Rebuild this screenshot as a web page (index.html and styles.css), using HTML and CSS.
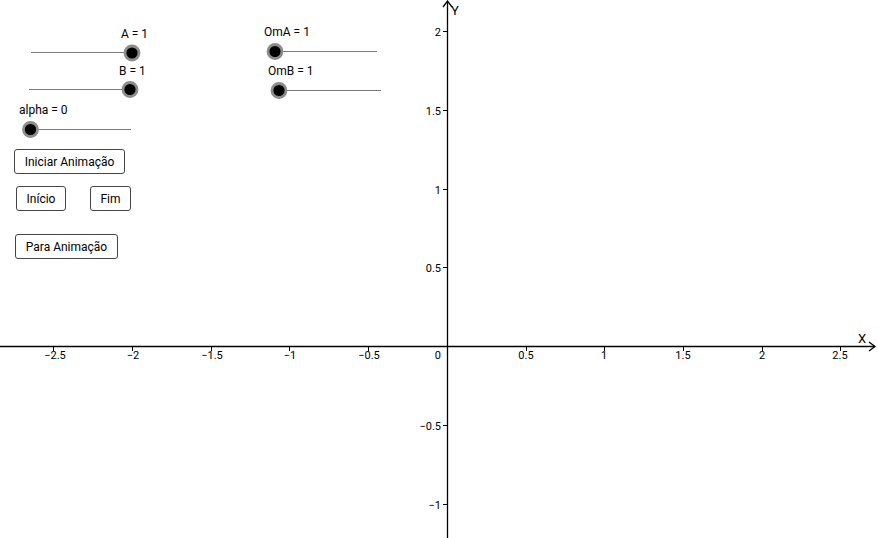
FILE: index.html
```html
<!DOCTYPE html>
<html lang="pt">
<head>
<meta charset="utf-8">
<title>GeoGebra</title>
<link rel="stylesheet" href="styles.css">
</head>
<body>
<div class="canvas">
  <svg class="graphics" width="878" height="538" viewBox="0 0 878 538" xmlns="http://www.w3.org/2000/svg">
    <!-- axes -->
    <g class="axis">
      <line x1="0" y1="346.5" x2="875" y2="346.5"/>
      <polyline points="869,342 875,346.5 869,351" fill="none"/>
      <line x1="447.5" y1="2" x2="447.5" y2="538"/>
      <polyline points="443,7 447.5,1 452,7" fill="none"/>
    </g>
    <g class="ticks">
      <line x1="53.5" y1="346.5" x2="53.5" y2="351"/>
      <line x1="132.5" y1="346.5" x2="132.5" y2="351"/>
      <line x1="211.5" y1="346.5" x2="211.5" y2="351"/>
      <line x1="289.5" y1="346.5" x2="289.5" y2="351"/>
      <line x1="368.5" y1="346.5" x2="368.5" y2="351"/>
      <line x1="526.5" y1="346.5" x2="526.5" y2="351"/>
      <line x1="604.5" y1="346.5" x2="604.5" y2="351"/>
      <line x1="683.5" y1="346.5" x2="683.5" y2="351"/>
      <line x1="762.5" y1="346.5" x2="762.5" y2="351"/>
      <line x1="840.5" y1="346.5" x2="840.5" y2="351"/>
      <line x1="443" y1="31.5" x2="447.5" y2="31.5"/>
      <line x1="443" y1="110.5" x2="447.5" y2="110.5"/>
      <line x1="443" y1="189.5" x2="447.5" y2="189.5"/>
      <line x1="443" y1="267.5" x2="447.5" y2="267.5"/>
      <line x1="443" y1="425.5" x2="447.5" y2="425.5"/>
      <line x1="443" y1="504.5" x2="447.5" y2="504.5"/>
    </g>
    <g class="tick-label xl">
      <text x="55" y="359">−2.5</text>
      <text x="133" y="359">−2</text>
      <text x="212" y="359">−1.5</text>
      <text x="290" y="359">−1</text>
      <text x="369" y="359">−0.5</text>
      <text x="526" y="359">0.5</text>
      <text x="604" y="359">1</text>
      <text x="683" y="359">1.5</text>
      <text x="762" y="359">2</text>
      <text x="840" y="359">2.5</text>
    </g>
    <g class="tick-label yl">
      <text x="441" y="35.5">2</text>
      <text x="441" y="114.5">1.5</text>
      <text x="441" y="193.5">1</text>
      <text x="441" y="271.5">0.5</text>
      <text x="441" y="359">0</text>
      <text x="441" y="429.5">−0.5</text>
      <text x="441" y="508.5">−1</text>
    </g>
    <text class="axis-name" x="858" y="343">X</text>
    <text class="axis-name" x="451" y="15">Y</text>

    <!-- sliders -->
    <g class="slider">
      <line x1="31" y1="52.5" x2="132" y2="52.5"/>
      <line x1="29" y1="89.5" x2="130" y2="89.5"/>
      <line x1="30" y1="129.5" x2="131" y2="129.5"/>
      <line x1="275" y1="51.5" x2="377" y2="51.5"/>
      <line x1="279" y1="90.5" x2="381" y2="90.5"/>
    </g>
    <g class="knob">
      <circle cx="132" cy="53" r="7"/>
      <circle cx="130" cy="89.5" r="7"/>
      <circle cx="30.5" cy="129.5" r="7"/>
      <circle cx="275" cy="51.5" r="7"/>
      <circle cx="279" cy="90.5" r="7"/>
    </g>
    <g class="slider-label">
      <text x="121" y="37.5">A = 1</text>
      <text x="119" y="74.5">B = 1</text>
      <text x="19" y="113.5">alpha = 0</text>
      <text x="264" y="35.5">OmA = 1</text>
      <text x="268" y="74.5">OmB = 1</text>
    </g>
  </svg>

  <button class="ggb-btn btn-iniciar">Iniciar Animação</button>
  <button class="ggb-btn btn-inicio">Início</button>
  <button class="ggb-btn btn-fim">Fim</button>
  <button class="ggb-btn btn-para">Para Animação</button>
</div>
</body>
</html>
```

FILE: styles.css
```css
html, body {
  margin: 0;
  padding: 0;
  background: #ffffff;
  overflow: hidden;
}

.canvas {
  position: relative;
  width: 878px;
  height: 538px;
  background: #ffffff;
  font-family: Roboto, "Liberation Sans", sans-serif;
}

.graphics {
  position: absolute;
  left: 0;
  top: 0;
  display: block;
}

.axis line,
.axis polyline {
  stroke: #000000;
  stroke-width: 1.3;
}

.ticks line {
  stroke: #000000;
  stroke-width: 1;
}

.tick-label text {
  font-family: Roboto, "Liberation Sans", sans-serif;
  font-size: 11px;
  fill: #000000;
}

.xl text {
  text-anchor: middle;
}

.yl text {
  text-anchor: end;
}

.axis-name {
  font-family: Roboto, "Liberation Sans", sans-serif;
  font-size: 13px;
  fill: #000000;
}

.slider line {
  stroke: #7a7a7a;
  stroke-width: 1;
}

.knob circle {
  fill: #000000;
  stroke: #8c8c8c;
  stroke-width: 2.8;
}

.slider-label text {
  font-family: Roboto, "Liberation Sans", sans-serif;
  font-size: 12px;
  fill: #000000;
}

.ggb-btn {
  position: absolute;
  box-sizing: border-box;
  height: 25px;
  margin: 0;
  padding: 0;
  background: #ffffff;
  border: 1.6px solid #454545;
  border-radius: 3px;
  font-family: Roboto, "Liberation Sans", sans-serif;
  font-size: 12px;
  color: #000000;
  line-height: 22px;
  text-align: center;
}

.btn-iniciar {
  left: 14px;
  top: 149px;
  width: 111px;
}

.btn-inicio {
  left: 16px;
  top: 186px;
  width: 50px;
}

.btn-fim {
  left: 90px;
  top: 186px;
  width: 41px;
}

.btn-para {
  left: 15px;
  top: 234px;
  width: 103px;
}
```
